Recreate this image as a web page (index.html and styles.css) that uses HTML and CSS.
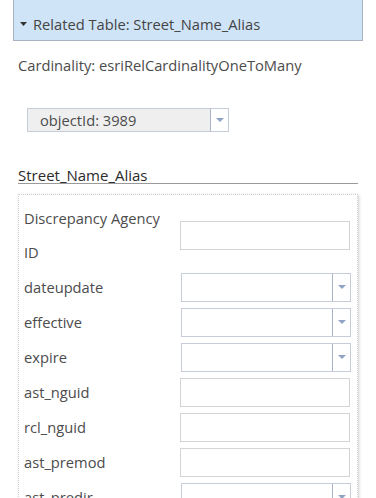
FILE: index.html
```html
<!DOCTYPE html>
<html lang="en">
<head>
    <meta charset="UTF-8">
    <title>Related Table</title>
    <link rel="stylesheet" href="styles.css">
</head>
<body>
    <div class="panel">
        <div class="rel-header">
            <svg class="caret" width="7" height="4" viewBox="0 0 7 4"><path d="M0 0h7L3.5 4z" fill="#333"/></svg>
            <span>Related Table: Street_Name_Alias</span>
        </div>

        <p class="cardinality">Cardinality: esriRelCardinalityOneToMany</p>

        <div class="record-select">
            <span class="record-value">objectId: 3989</span>
            <span class="drop-btn"><svg width="8" height="4" viewBox="0 0 8 4"><path d="M0 0h8L4 4z" fill="#8fa3c4"/></svg></span>
        </div>

        <h3 class="table-title">Street_Name_Alias</h3>

        <div class="attr-card">
            <div class="attr-grid">
                <label>Discrepancy Agency ID</label>
                <input class="field" type="text">

                <label>dateupdate</label>
                <div class="field-select"><span></span><span class="drop-btn"><svg width="8" height="4" viewBox="0 0 8 4"><path d="M0 0h8L4 4z" fill="#8fa3c4"/></svg></span></div>

                <label>effective</label>
                <div class="field-select"><span></span><span class="drop-btn"><svg width="8" height="4" viewBox="0 0 8 4"><path d="M0 0h8L4 4z" fill="#8fa3c4"/></svg></span></div>

                <label>expire</label>
                <div class="field-select"><span></span><span class="drop-btn"><svg width="8" height="4" viewBox="0 0 8 4"><path d="M0 0h8L4 4z" fill="#8fa3c4"/></svg></span></div>

                <label>ast_nguid</label>
                <input class="field" type="text">

                <label>rcl_nguid</label>
                <input class="field" type="text">

                <label>ast_premod</label>
                <input class="field" type="text">

                <label>ast_predir</label>
                <div class="field-select"><span></span><span class="drop-btn"><svg width="8" height="4" viewBox="0 0 8 4"><path d="M0 0h8L4 4z" fill="#8fa3c4"/></svg></span></div>
            </div>
        </div>
    </div>
</body>
</html>
```

FILE: styles.css
```css
:root {
    --text: #4c4c4c;
    --title: #2b2b2b;
    --header-bg: #d0e4f8;
    --header-border: #a9b4c3;
    --field-border: #d4d4d4;
    --select-border: #c6ccd8;
    --divider: #aab4c9;
}

* {
    box-sizing: border-box;
}

body {
    margin: 0;
    font-family: "Open Sans", Lato, sans-serif;
    font-size: 14.7px;
    color: var(--text);
    background: #fff;
    overflow: hidden;
}

.rel-header {
    margin: 0 13px;
    height: 41px;
    padding: 8px 0 0 6px;
    display: flex;
    align-items: center;
    gap: 6px;
    background: var(--header-bg);
    border: 1px solid var(--header-border);
    border-top: 0;
    color: #444;
}

.cardinality {
    margin: 14px 18px 0;
    line-height: 20px;
}

.record-select {
    margin: 33px 0 0 27px;
    width: 202px;
    height: 24px;
    display: flex;
    border: 1px solid var(--select-border);
    background: #efefef;
}

.record-value {
    flex: 1;
    padding-left: 12px;
    line-height: 22px;
}

.drop-btn {
    width: 18px;
    display: flex;
    align-items: center;
    justify-content: center;
    background: #fff;
    border-left: 1px solid var(--divider);
}

.table-title {
    margin: 35px 18px 0;
    font-size: 15px;
    font-weight: normal;
    line-height: 16px;
    color: var(--title);
    border-bottom: 1px solid #9a9a9a;
}

.attr-card {
    margin: 10px 18px 0;
    padding: 6px 7px 20px 5px;
    border: 1px dotted #cfcfcf;
    box-shadow: 1px 1px 3px rgba(0, 0, 0, 0.2);
}

.attr-grid {
    display: grid;
    grid-template-columns: 150px 170px;
    column-gap: 6px;
    row-gap: 1px;
    align-items: center;
}

.attr-grid label {
    line-height: 34px;
}

.field {
    display: block;
    width: 170px;
    height: 29px;
    margin: 0;
    border: 1px solid var(--field-border);
    background: #fff;
}

.field-select {
    width: 170px;
    height: 29px;
    margin-left: 1px;
    display: flex;
    border: 1px solid var(--select-border);
    background: #fff;
}

.field-select span:first-child {
    flex: 1;
}
```
